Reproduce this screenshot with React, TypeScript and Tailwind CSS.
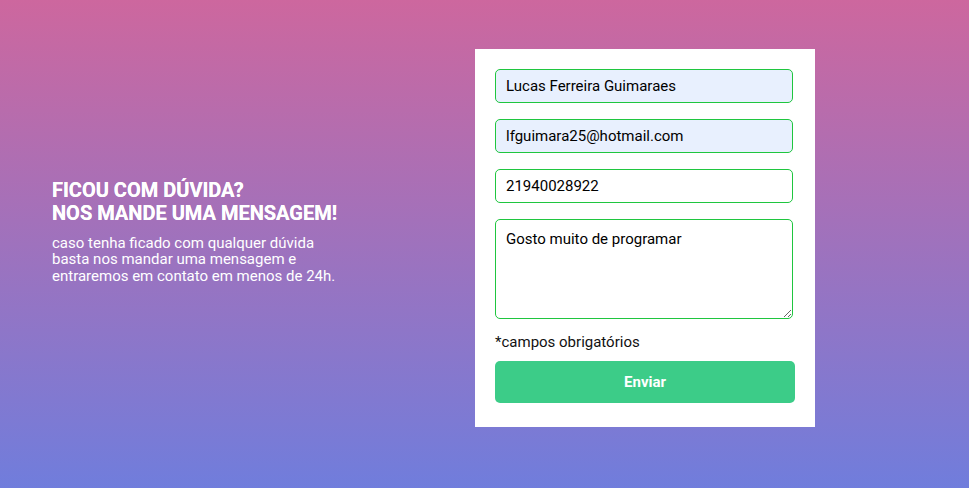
import React from "react";

export default function App() {
  return (
    <div
      className="w-[969px] h-[488px] flex items-center bg-[linear-gradient(to_bottom,#cd679e,#707ddc)]"
      style={{ fontFamily: "Roboto, 'Liberation Sans', sans-serif" }}
    >
      <div className="w-[475px] pl-[52px] mt-[-25px]">
        <h1 className="text-white font-bold text-[20px] leading-[23px] uppercase [text-shadow:0_0_0.4px_#fff]">
          Ficou com dúvida?
          <br />
          Nos mande uma mensagem!
        </h1>
        <p className="text-white text-[15px] leading-[16.5px] mt-[10px]">
          caso tenha ficado com qualquer dúvida
          <br />
          basta nos mandar uma mensagem e
          <br />
          entraremos em contato em menos de 24h.
        </p>
      </div>
      <div className="w-[340px] h-[378px] bg-white mt-[-12px] px-[20px] pt-[20px] flex flex-col">
        <input
          readOnly
          value="Lucas Ferreira Guimaraes"
          className="w-[298px] h-[34px] rounded-[5px] border border-[#1fc63f] bg-[#e8f0fe] px-[10px] text-[15px] text-black outline-none"
        />
        <input
          readOnly
          value="lfguimara25@hotmail.com"
          className="w-[298px] h-[34px] mt-[16px] rounded-[5px] border border-[#1fc63f] bg-[#e8f0fe] px-[10px] text-[15px] text-black outline-none"
        />
        <input
          readOnly
          value="21940028922"
          className="w-[298px] h-[34px] mt-[16px] rounded-[5px] border border-[#1fc63f] bg-white px-[10px] text-[15px] text-black outline-none"
        />
        <textarea
          readOnly
          value="Gosto muito de programar"
          className="w-[298px] h-[100px] mt-[16px] rounded-[5px] border border-[#1fc63f] bg-white px-[10px] pt-[10px] text-[15px] leading-[18px] text-black outline-none"
        />
        <p className="mt-[14px] text-[15px] leading-[18px] text-[#111]">*campos obrigatórios</p>
        <button className="w-[300px] h-[42px] mt-[10px] rounded-[5px] bg-[#3ccc88] text-white font-bold text-[15px]">
          Enviar
        </button>
      </div>
    </div>
  );
}
